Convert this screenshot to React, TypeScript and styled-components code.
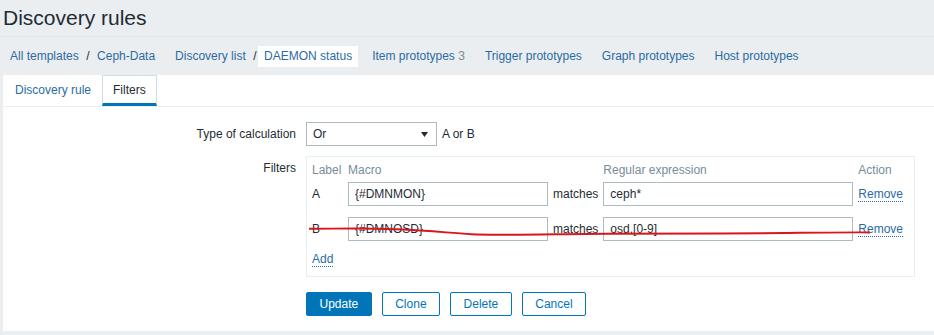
import styled, { createGlobalStyle } from "styled-components";

const GlobalStyle = createGlobalStyle`
  body {
    margin: 0;
    background: #ebeef0;
    font-family: "Liberation Sans", Arial, sans-serif;
    font-size: 12px;
    color: #1f2c33;
  }
`;

const linkColor = "#2b6ba3";
const accent = "#0275b8";

const Header = styled.header`
  height: 36px;
  border-bottom: 1px solid #dde2e5;
  display: flex;
  align-items: center;
  padding-left: 3px;
`;

const Title = styled.h1`
  margin: 0;
  font-size: 21px;
  font-weight: normal;
  line-height: 36px;
`;

const Nav = styled.nav`
  height: 38px;
  display: flex;
  align-items: center;
  padding-left: 4px;
`;

const NavGroup = styled.div`
  display: flex;
  align-items: center;
  margin-right: 8px;
`;

const Crumb = styled.a<{ $active?: boolean }>`
  padding: 4px 6px;
  line-height: 13px;
  color: ${linkColor};
  background: ${(p) => (p.$active ? "#fff" : "transparent")};
  text-decoration: none;
`;

const Sep = styled.span`
  color: #1f2c33;
  margin: 0 1.5px;
`;

const Count = styled.span`
  color: #768d99;
`;

const Panel = styled.main`
  background: #fff;
  margin: 0 0 4px 3px;
  padding-bottom: 15px;
`;

const Tabs = styled.ul`
  list-style: none;
  margin: 0;
  padding: 0 0 0 1px;
  display: flex;
  border-bottom: 1px solid #ebeef0;
`;

const Tab = styled.li<{ $active?: boolean }>`
  box-sizing: border-box;
  height: 31px;
  display: flex;
  align-items: center;
  padding: 0 10px;
  border: 1px solid ${(p) => (p.$active ? "#d1dde5" : "transparent")};
  border-bottom: 3px solid ${(p) => (p.$active ? accent : "transparent")};
  color: ${(p) => (p.$active ? "#1f2c33" : linkColor)};
`;

const Form = styled.form`
  padding-top: 15px;
  display: grid;
  grid-template-columns: 293px auto;
  column-gap: 10px;
  row-gap: 10px;
  align-items: start;
`;

const Label = styled.label<{ $tall?: boolean }>`
  text-align: right;
  line-height: ${(p) => (p.$tall ? "24px" : "14px")};
  padding-top: ${(p) => (p.$tall ? "0" : "5px")};
`;

const Field = styled.div`
  display: flex;
  align-items: center;
  gap: 5px;
`;

const Select = styled.div`
  box-sizing: border-box;
  width: 131px;
  height: 24px;
  border: 1px solid #acbbc2;
  display: flex;
  align-items: center;
  justify-content: space-between;
  padding: 0 8px 0 6px;
`;

const FilterBox = styled.div`
  position: relative;
  box-sizing: border-box;
  width: 609px;
  border: 1px solid #ebeef0;
  padding: 6px 9px 10px 5px;
`;

const FilterGrid = styled.div`
  display: grid;
  grid-template-columns: 31px 200px auto 250px auto;
  column-gap: 5px;
  justify-content: start;
`;

const HeadCell = styled.div`
  color: #768d99;
  line-height: 14px;
  padding-bottom: 5px;
`;

const Cell = styled.div`
  display: flex;
  align-items: center;
  height: 24px;
  padding-bottom: 11px;
`;

const Input = styled.input`
  box-sizing: border-box;
  width: 100%;
  height: 24px;
  border: 1px solid #acbbc2;
  padding: 0 6px;
  font: inherit;
  color: #1f2c33;
  outline: none;
`;

const LinkButton = styled.a`
  color: ${linkColor};
  text-decoration: none;
  border-bottom: 1px dotted ${linkColor};
  line-height: 14px;
`;

const AddRow = styled.div`
  grid-column: 1 / -1;
  line-height: 14px;
`;

const Scribble = styled.svg`
  position: absolute;
  left: 0;
  top: 0;
  width: 100%;
  height: 100%;
  pointer-events: none;
`;

const Buttons = styled.div`
  grid-column: 2;
  display: flex;
  gap: 10px;
  margin-top: 5px;
`;

const Button = styled.button<{ $primary?: boolean }>`
  height: 24px;
  padding: 0 12.5px;
  border: 1px solid ${accent};
  border-radius: 2px;
  background: ${(p) => (p.$primary ? accent : "#fff")};
  color: ${(p) => (p.$primary ? "#fff" : accent)};
  font: inherit;
  cursor: pointer;
`;

const filters = [
  { label: "A", macro: "{#DMNMON}", regex: "ceph*" },
  { label: "B", macro: "{#DMNOSD}", regex: "osd.[0-9]" },
];

export default function App() {
  return (
    <>
      <GlobalStyle />
      <Header>
        <Title>Discovery rules</Title>
      </Header>
      <Nav>
        <NavGroup>
          <Crumb>All templates</Crumb>
          <Sep>/</Sep>
          <Crumb>Ceph-Data</Crumb>
        </NavGroup>
        <NavGroup>
          <Crumb>Discovery list</Crumb>
          <Sep>/</Sep>
          <Crumb $active>DAEMON status</Crumb>
        </NavGroup>
        <NavGroup>
          <Crumb>
            Item prototypes <Count>3</Count>
          </Crumb>
        </NavGroup>
        <NavGroup>
          <Crumb>Trigger prototypes</Crumb>
        </NavGroup>
        <NavGroup>
          <Crumb>Graph prototypes</Crumb>
        </NavGroup>
        <NavGroup>
          <Crumb>Host prototypes</Crumb>
        </NavGroup>
      </Nav>
      <Panel>
        <Tabs>
          <Tab>Discovery rule</Tab>
          <Tab $active>Filters</Tab>
        </Tabs>
        <Form onSubmit={(e) => e.preventDefault()}>
          <Label $tall>Type of calculation</Label>
          <Field>
            <Select>
              <span>Or</span>
              <svg width="7" height="5" viewBox="0 0 7 5">
                <path d="M0 0h7L3.5 5z" fill="#1f2c33" />
              </svg>
            </Select>
            <span>A or B</span>
          </Field>

          <Label>Filters</Label>
          <FilterBox>
            <FilterGrid>
              <HeadCell>Label</HeadCell>
              <HeadCell>Macro</HeadCell>
              <HeadCell />
              <HeadCell>Regular expression</HeadCell>
              <HeadCell>Action</HeadCell>
              {filters.map((f) => [
                <Cell key={f.label + "l"}>{f.label}</Cell>,
                <Cell key={f.label + "m"}>
                  <Input readOnly value={f.macro} />
                </Cell>,
                <Cell key={f.label + "o"}>matches</Cell>,
                <Cell key={f.label + "r"}>
                  <Input readOnly value={f.regex} />
                </Cell>,
                <Cell key={f.label + "a"}>
                  <LinkButton>Remove</LinkButton>
                </Cell>,
              ])}
              <AddRow>
                <LinkButton>Add</LinkButton>
              </AddRow>
            </FilterGrid>
            <Scribble viewBox="0 0 609 121" preserveAspectRatio="none">
              <path
                d="M2 73 C30 73 54 72 90 73.5 S140 77 165 78.5 S260 78 300 78 S420 78 480 77.3 S545 76.5 565 76.7"
                fill="none"
                stroke="#d9161b"
                strokeWidth="2"
              />
            </Scribble>
          </FilterBox>

          <Buttons>
            <Button $primary>Update</Button>
            <Button>Clone</Button>
            <Button>Delete</Button>
            <Button>Cancel</Button>
          </Buttons>
        </Form>
      </Panel>
    </>
  );
}
